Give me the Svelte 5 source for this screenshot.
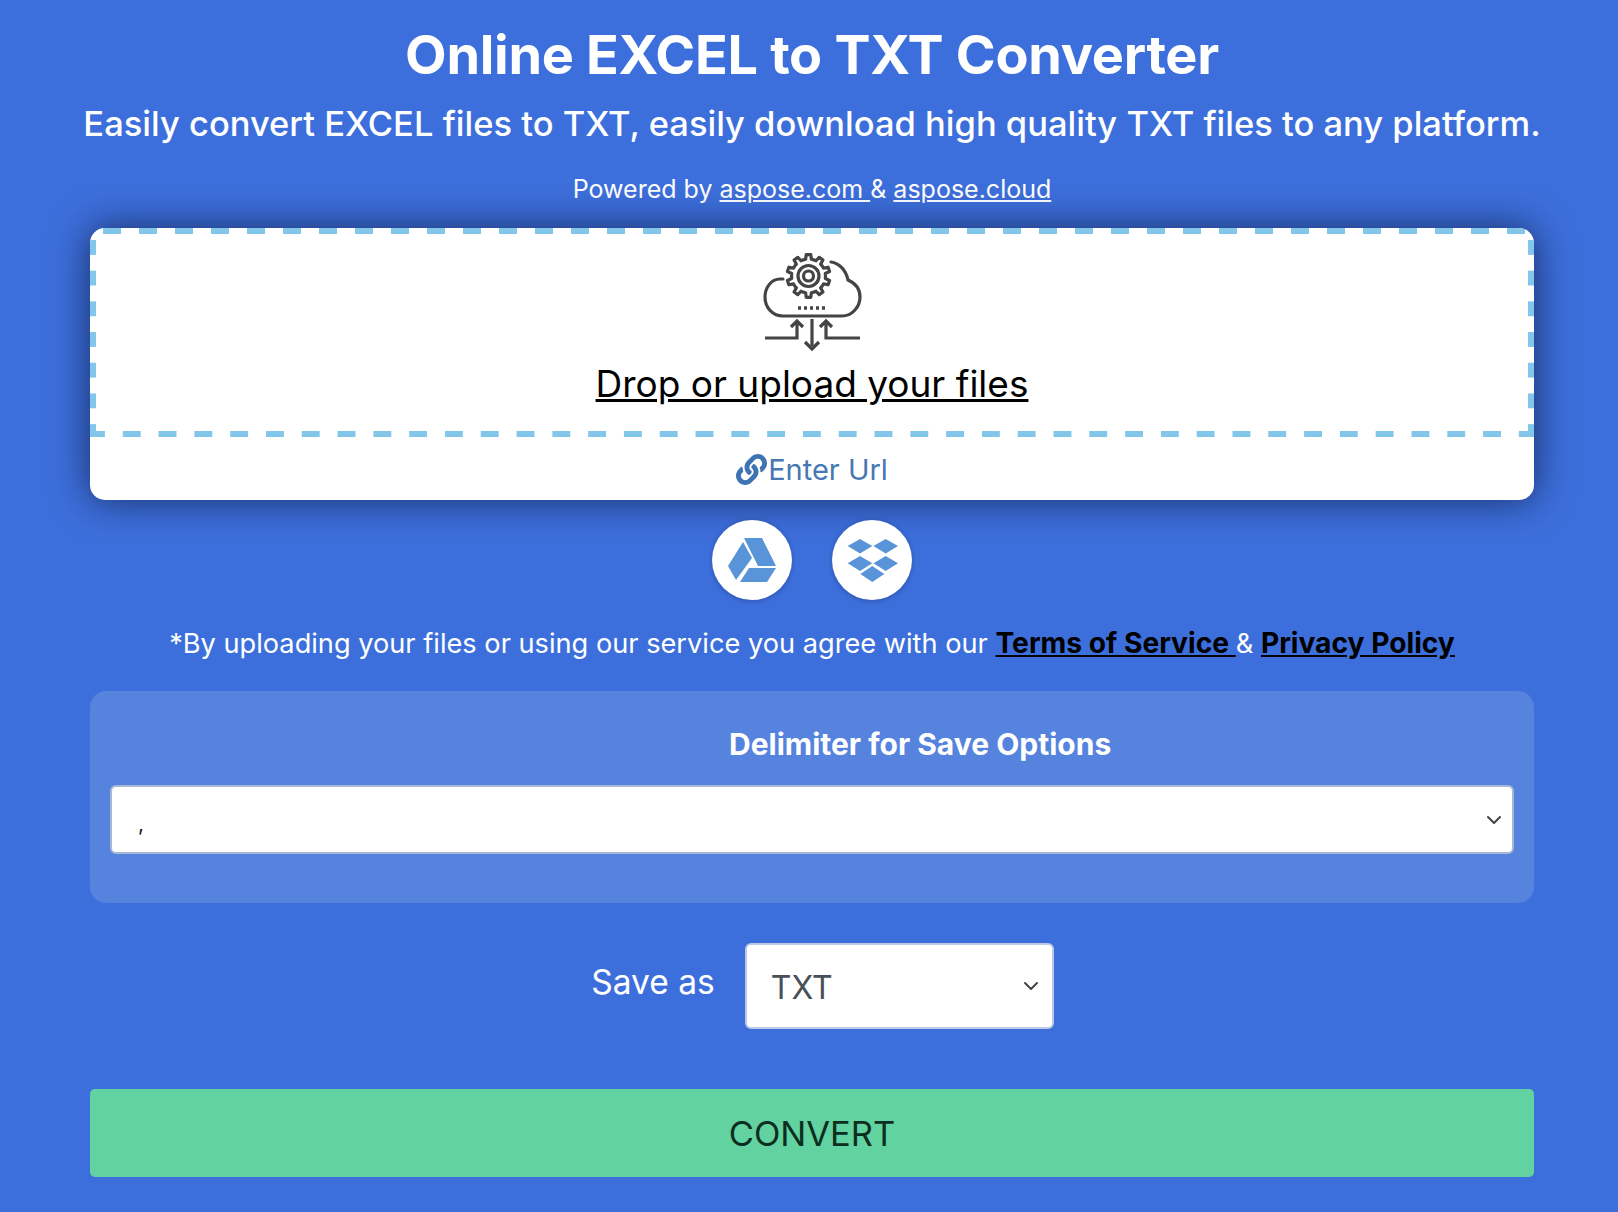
<script>
  const cx = 808.5, cy = 276;
  const teeth = 10;
  const r1 = 17, r2 = 21.5;
  function gearPath() {
    let d = '';
    const step = (Math.PI * 2) / teeth;
    for (let i = 0; i < teeth; i++) {
      const a = i * step - Math.PI / 2;
      const pts = [
        [r1, a - step * 0.5],
        [r1, a - step * 0.27],
        [r2, a - step * 0.17],
        [r2, a + step * 0.17],
        [r1, a + step * 0.27]
      ];
      for (const [r, t] of pts) {
        const x = (cx + r * Math.cos(t)).toFixed(2);
        const y = (cy + r * Math.sin(t)).toFixed(2);
        d += (d ? 'L' : 'M') + x + ' ' + y + ' ';
      }
    }
    return d + 'Z';
  }
  const gear = gearPath();
</script>

<main class="page">
  <h1>Online EXCEL to TXT Converter</h1>
  <p class="sub">Easily convert EXCEL files to TXT, easily download high quality TXT files to any platform.</p>
  <p class="powered">Powered by <a href="#a">aspose.com{' '}</a>&amp; <a href="#b">aspose.cloud</a></p>

  <section class="card">
    <div class="drop">
      <svg class="cloud" width="104" height="104" viewBox="760 250 104 104" fill="none" stroke="#444" stroke-width="3.200" aria-hidden="true">
        <path d={gear} stroke-linejoin="round" />
        <circle cx="808.500" cy="276" r="10.500" />
        <circle cx="808.500" cy="276" r="5" />
        <path d="M783 279H780C771 279 765 288 765 297C765 308 773 316 783 316H842C852 316 860 307 860 297C860 289 855 283 848 280C846 270 839 263 831 262" stroke-linecap="round" />
        <path d="M798 308H828" stroke-dasharray="3 3" stroke-width="3.500" />
        <path d="M812 319V346M805 342L812 349L819 342" />
        <path d="M765 338H797V322M791 327L797 321L803 327" />
        <path d="M860 338H826V322M820 327L826 321L832 327" />
      </svg>
      <a class="upload" href="#u">Drop or upload your files</a>
    </div>
    <div class="url">
      <svg width="31" height="31" viewBox="0 0 512 512" fill="#3f74b3" aria-hidden="true"><path d="M326.612 185.391c59.747 59.809 58.927 155.698.36 214.59-.11.12-.24.25-.36.37l-67.2 67.2c-59.27 59.27-155.699 59.262-214.96 0-59.27-59.26-59.27-155.7 0-214.96l37.106-37.106c9.84-9.84 26.786-3.3 27.294 10.606.648 17.722 3.826 35.527 9.69 52.721 1.986 5.822.567 12.262-3.783 16.612l-13.087 13.087c-28.026 28.026-28.905 73.66-1.155 101.96 28.024 28.579 74.086 28.749 102.325.51l67.2-67.19c28.191-28.191 28.073-73.757 0-101.83-3.701-3.694-7.429-6.564-10.341-8.569a16.037 16.037 0 0 1-6.947-12.606c-.396-10.567 3.348-21.456 11.698-29.806l21.054-21.055c5.521-5.521 14.182-6.199 20.584-1.731a152.482 152.482 0 0 1 20.522 17.197zM467.547 44.449c-59.261-59.262-155.69-59.27-214.96 0l-67.2 67.2c-.12.12-.25.25-.36.37-58.566 58.892-59.387 154.781.36 214.59a152.454 152.454 0 0 0 20.521 17.196c6.402 4.468 15.064 3.789 20.584-1.731l21.054-21.055c8.35-8.35 12.094-19.239 11.698-29.806a16.037 16.037 0 0 0-6.947-12.606c-2.912-2.005-6.64-4.875-10.341-8.569-28.073-28.073-28.191-73.639 0-101.83l67.2-67.19c28.239-28.239 74.3-28.069 102.325.51 27.75 28.3 26.872 73.934-1.155 101.96l-13.087 13.087c-4.35 4.35-5.769 10.79-3.783 16.612 5.864 17.194 9.042 34.999 9.69 52.721.509 13.906 17.454 20.446 27.294 10.606l37.106-37.106c59.271-59.259 59.271-155.699.001-214.959z"/></svg>
      <span>Enter Url</span>
    </div>
  </section>

  <div class="clouds">
    <button class="round" aria-label="Google Drive">
      <svg width="80" height="80" viewBox="0 0 80 80" fill="#5a94d8" aria-hidden="true">
        <path d="M32 18H50L64 46H46Z" />
        <path d="M31 22L40 38L24 60L16 46Z" />
        <path d="M28 62L37 48H64L55 62Z" />
      </svg>
    </button>
    <button class="round" aria-label="Dropbox">
      <svg width="80" height="80" viewBox="0 0 80 80" fill="#5a94d8" aria-hidden="true">
        <path d="M28 19L40.3 26L28 33.5L15.700 26Z" />
        <path d="M53.700 19L66 26L53.700 33.5L41.400 26Z" />
        <path d="M28 36L40.300 43.300L28 51L15.700 43.300Z" />
        <path d="M53.700 36L66 43.300L53.700 51L41.400 43.300Z" />
        <path d="M40.300 46L52.300 54L40.300 62L28.300 54Z" />
      </svg>
    </button>
  </div>

  <p class="terms">*By uploading your files or using our service you agree with our <a href="#t">Terms of Service{' '}</a>&amp; <a href="#p">Privacy Policy</a></p>

  <section class="panel">
    <div class="panel-label">Delimiter for Save Options</div>
    <select class="delim" aria-label="Delimiter"><option>,</option></select>
  </section>

  <div class="save">
    <span>Save as</span>
    <select class="fmt" aria-label="Save as"><option>TXT</option></select>
  </div>

  <button class="convert">CONVERT</button>
</main>

<style>
  :global(body) {
    margin: 0;
    background: #3d6fdc;
  }
  .page {
    box-sizing: border-box;
    width: 1618px;
    min-height: 1212px;
    padding: 25px 84px 35px 90px;
    background: #3d6fdc;
    color: #fff;
    font-family: Inter, "Liberation Sans", sans-serif;
    text-align: center;
  }
  h1 {
    margin: 0;
    font-size: 54px;
    line-height: 60px;
    font-weight: 700;
    letter-spacing: -0.3px;
  }
  .sub {
    margin: 17px -10px 0;
    font-size: 34.500px;
    line-height: 44px;
    font-weight: 500;
    white-space: nowrap;
  }
  .powered {
    margin: 28px 0 0;
    font-size: 25px;
    line-height: 30px;
  }
  .powered a {
    color: #fff;
  }
  .card {
    margin-top: 24px;
    height: 272px;
    background: #fff;
    border-radius: 15px;
    overflow: hidden;
    box-shadow: 0 0 38px rgba(10, 20, 50, 0.72);
    position: relative;
  }
  .clouds, .terms, .panel, .save, .convert {
    position: relative;
  }
  .drop {
    box-sizing: border-box;
    height: 209px;
    padding-top: 22px;
    display: flex;
    flex-direction: column;
    align-items: center;
    background-image:
      linear-gradient(90deg, #82c6ea 50%, transparent 50%),
      linear-gradient(90deg, #82c6ea 50%, transparent 50%),
      linear-gradient(180deg, #82c6ea 50%, transparent 50%),
      linear-gradient(180deg, #82c6ea 50%, transparent 50%);
    background-size: 36px 6px, 35.800px 6px, 6px 30.700px, 6px 30.700px;
    background-position: 13px 0, -3px 100%, 0 12px, 100% 12px;
    background-repeat: repeat-x, repeat-x, repeat-y, repeat-y;
  }
  .cloud {
    flex: none;
  }
  .upload {
    margin-top: 7px;
    color: #000;
    font-size: 37px;
    line-height: 46px;
  }
  .url {
    height: 63px;
    padding-top: 2px;
    box-sizing: border-box;
    display: flex;
    align-items: center;
    justify-content: center;
    gap: 1px;
    color: #4678b4;
    font-size: 29px;
  }
  .clouds {
    margin-top: 20px;
    display: flex;
    justify-content: center;
    gap: 40px;
  }
  .round {
    width: 80px;
    height: 80px;
    padding: 0;
    border: 0;
    border-radius: 50%;
    background: #fff;
    box-shadow: 0 1px 5px rgba(20, 30, 70, 0.35);
  }
  .round svg {
    display: block;
  }
  .terms {
    margin: 25px 0 0;
    font-size: 27.200px;
    line-height: 36px;
    white-space: nowrap;
  }
  .terms a {
    color: #000;
    font-size: 28.200px;
    font-weight: 700;
  }
  .panel {
    margin-top: 29px;
    box-sizing: border-box;
    height: 212px;
    padding: 35px 20px 0;
    background: #5683de;
    border-radius: 16px;
    text-align: left;
  }
  .panel-label {
    padding-left: 619px;
    font-size: 30px;
    line-height: 36px;
    font-weight: 700;
  }
  select {
    display: block;
    box-sizing: border-box;
    appearance: none;
    background-color: #fff;
    background-image: url("data:image/svg+xml,%3csvg xmlns='http://www.w3.org/2000/svg' viewBox='0 0 16 16'%3e%3cpath fill='none' stroke='%23444' stroke-linecap='round' stroke-linejoin='round' stroke-width='2' d='M2 5l6 6 6-6'/%3e%3c/svg%3e");
    background-repeat: no-repeat;
    background-size: 16px 16px;
    color: #495057;
    font-family: Inter, "Liberation Sans", sans-serif;
  }
  .delim {
    width: 1404px;
    height: 69px;
    margin-top: 23px;
    padding: 8px 26px 0;
    border: 2px solid #a8b7d4;
    border-radius: 6px;
    background-position: right 10px center;
    font-size: 21px;
    color: #222;
  }
  .save {
    margin-top: 40px;
    padding-left: 21px;
    display: flex;
    align-items: center;
    justify-content: center;
    gap: 30px;
    font-size: 33.500px;
  }
  .save span {
    margin-bottom: 9px;
  }
  .fmt {
    width: 309px;
    height: 86px;
    padding: 3px 24px 0;
    border: 2px solid #bcc9e6;
    border-radius: 6px;
    background-position: right 13px center;
    font-size: 32px;
  }
  .convert {
    display: block;
    width: 100%;
    height: 88px;
    margin-top: 60px;
    border: 0;
    border-radius: 5px;
    background: #62d2a0;
    color: #0c2e20;
    font-family: Inter, "Liberation Sans", sans-serif;
    font-size: 34.500px;
  }
</style>
